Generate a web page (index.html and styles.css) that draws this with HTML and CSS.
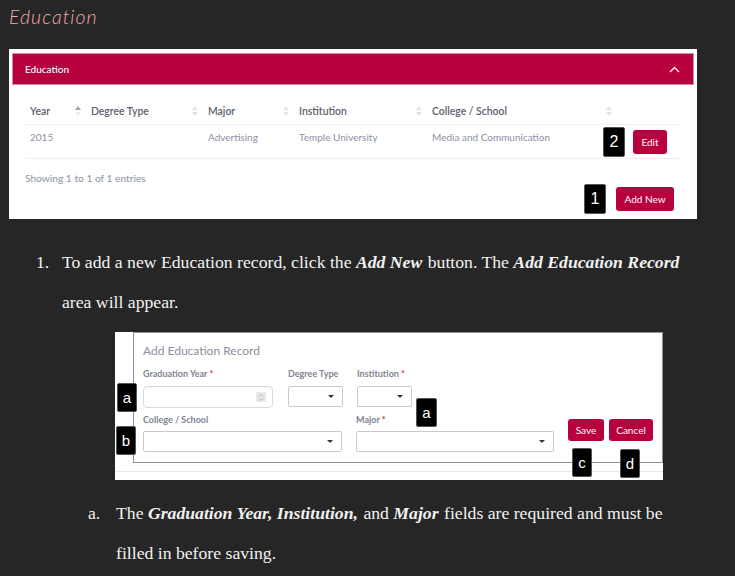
FILE: index.html
```html
<!DOCTYPE html>
<html lang="en">
<head>
<meta charset="utf-8">
<title>Education</title>
<link rel="stylesheet" href="styles.css">
</head>
<body>
<h1 class="page-title">Education</h1>

<section class="panel">
  <div class="panel-head">
    <span class="panel-title">Education</span>
    <svg class="chev" width="11" height="7" viewBox="0 0 11 7"><path d="M1 6 L5.5 1.5 L10 6" fill="none" stroke="#fff" stroke-width="1.3"/></svg>
  </div>
  <table class="grid">
    <colgroup>
      <col class="c1"><col class="c2"><col class="c3"><col class="c4"><col class="c5"><col class="c6">
    </colgroup>
    <thead>
      <tr>
        <th><div class="th-in"><span>Year</span><svg class="sort" width="6" height="10" viewBox="0 0 6 10"><path d="M0 4 L3 0 L6 4Z" fill="#a3a7b0"/><path d="M0 6 L3 10 L6 6Z" fill="#eceef1"/></svg></div></th>
        <th><div class="th-in"><span>Degree Type</span><svg class="sort" width="6" height="10" viewBox="0 0 6 10"><path d="M0 4 L3 0 L6 4Z" fill="#e2e4e8"/><path d="M0 6 L3 10 L6 6Z" fill="#e2e4e8"/></svg></div></th>
        <th><div class="th-in"><span>Major</span><svg class="sort" width="6" height="10" viewBox="0 0 6 10"><path d="M0 4 L3 0 L6 4Z" fill="#e2e4e8"/><path d="M0 6 L3 10 L6 6Z" fill="#e2e4e8"/></svg></div></th>
        <th><div class="th-in"><span>Institution</span><svg class="sort" width="6" height="10" viewBox="0 0 6 10"><path d="M0 4 L3 0 L6 4Z" fill="#e2e4e8"/><path d="M0 6 L3 10 L6 6Z" fill="#e2e4e8"/></svg></div></th>
        <th><div class="th-in"><span>College / School</span><svg class="sort" width="6" height="10" viewBox="0 0 6 10"><path d="M0 4 L3 0 L6 4Z" fill="#e2e4e8"/><path d="M0 6 L3 10 L6 6Z" fill="#e2e4e8"/></svg></div></th>
        <th></th>
      </tr>
    </thead>
    <tbody>
      <tr>
        <td>2015</td>
        <td></td>
        <td>Advertising</td>
        <td>Temple University</td>
        <td>Media and Communication</td>
        <td class="act"><span class="badge badge-edit">2</span><button class="btn btn-edit">Edit</button></td>
      </tr>
    </tbody>
  </table>
  <div class="panel-foot">
    <div class="info">Showing 1 to 1 of 1 entries</div>
    <div class="actions"><span class="badge">1</span><button class="btn btn-add">Add New</button></div>
  </div>
</section>

<div class="step">
  <span class="num">1.</span>
  <div class="step-body">
    <p class="line">To add a new Education record, click the <b class="em">Add New</b> button. The <b class="em">Add Education Record</b> area will appear.</p>

    <div class="shot">
      <div class="frame">
        <div class="frame-title">Add Education Record</div>
        <div class="row row1">
          <div class="field f-year">
            <label>Graduation Year <span class="req">*</span></label>
            <div class="input num-input">
              <span class="spin"><svg width="6" height="9" viewBox="0 0 6 9"><path d="M1 3.5 L3 1.5 L5 3.5 M1 5.5 L3 7.5 L5 5.5" fill="none" stroke="#9a9ea6" stroke-width="0.8"/></svg></span>
            </div>
          </div>
          <div class="field f-deg">
            <label>Degree Type</label>
            <div class="select"><span class="caret"></span></div>
          </div>
          <div class="field f-inst">
            <label>Institution <span class="req">*</span></label>
            <div class="select"><span class="caret"></span></div>
          </div>
        </div>
        <div class="row row2">
          <div class="field f-college">
            <label>College / School</label>
            <div class="select"><span class="caret"></span></div>
          </div>
          <div class="field f-major">
            <label>Major <span class="req">*</span></label>
            <div class="select"><span class="caret"></span></div>
          </div>
          <div class="form-btns">
            <button class="btn btn-save">Save</button>
            <button class="btn btn-cancel">Cancel</button>
          </div>
        </div>
      </div>
      <div class="shot-line"></div>
      <span class="badge sb sb-a1">a</span>
      <span class="badge sb sb-a2">a</span>
      <span class="badge sb sb-b">b</span>
      <span class="badge sb sb-c">c</span>
      <span class="badge sb sb-d">d</span>
    </div>

    <div class="substep">
      <span class="num">a.</span>
      <p class="line sub-line">The <b class="em">Graduation Year, Institution,</b> and <b class="em">Major</b> fields are required and must be filled in before saving.</p>
    </div>
  </div>
</div>
</body>
</html>
```

FILE: styles.css
```css
* { box-sizing: border-box; }

body {
  margin: 0;
  background: #262626;
  width: 735px;
  height: 576px;
  overflow: hidden;
  font-family: "Lato", "Liberation Sans", sans-serif;
}

.page-title {
  margin: 6px 0 0 9px;
  font-family: "Lato", sans-serif;
  font-weight: 300;
  font-style: italic;
  font-size: 19.5px;
  line-height: 22px;
  color: #f4a9ac;
  letter-spacing: 1px;
}

.panel {
  margin: 21px 0 0 9px;
  width: 688px;
  height: 170px;
  background: #fff;
  padding: 4px 3px 3px 3px;
  display: flex;
  flex-direction: column;
}

.panel-head {
  height: 32px;
  background: #b9003f;
  border: 1px solid #dc8ba6;
  display: flex;
  align-items: center;
  justify-content: space-between;
  padding: 0 13px 0 12px;
}

.panel-title {
  color: #fff;
  font-size: 10px;
  font-weight: 500;
}

.chev { display: block; }

.grid {
  margin: 14px 12px 0 13px;
  width: 657px;
  table-layout: fixed;
  border-collapse: collapse;
  font-size: 10px;
}

.c1 { width: 61px; }
.c2 { width: 117px; }
.c3 { width: 91px; }
.c4 { width: 133px; }
.c5 { width: 190px; }
.c6 { width: 65px; }

.grid th {
  height: 25px;
  padding: 0;
  text-align: left;
  color: #5b606b;
  font-weight: 600;
  font-size: 10.4px;
  border-bottom: 1px solid #eef0f4;
  vertical-align: middle;
}

.th-in {
  display: flex;
  align-items: center;
  justify-content: space-between;
  padding: 0 5px 0 5px;
}

.sort { display: block; }

.grid td {
  height: 34px;
  padding: 6px 0 0 5px;
  vertical-align: top;
  color: #8c91a0;
  line-height: 12px;
  border-bottom: 1px solid #eceef2;
}

.grid td.act {
  position: relative;
  padding: 5px 0 0 16px;
}

.btn {
  border: none;
  background: #b9003f;
  color: #fff;
  font-family: "Lato", sans-serif;
  font-size: 10px;
  border-radius: 3px;
  padding: 0;
  display: inline-flex;
  align-items: center;
  justify-content: center;
}

.btn-edit { width: 34px; height: 24px; }
.btn-add { width: 58px; height: 24px; }

.badge {
  display: inline-flex;
  align-items: center;
  justify-content: center;
  width: 22px;
  height: 30px;
  background: #000;
  color: #fff;
  border: 1px solid #555;
  border-radius: 2px;
  font-family: "Liberation Sans", sans-serif;
  font-size: 16px;
}

.badge-edit {
  position: absolute;
  left: -14px;
  top: 2px;
}

.panel-foot {
  display: flex;
  flex-direction: column;
  padding: 0 20px 0 13px;
}

.info {
  padding-top: 14px;
  line-height: 11px;
  font-size: 10.2px;
  color: #8c91a0;
}

.actions {
  display: flex;
  align-items: center;
  justify-content: flex-end;
  gap: 10px;
  height: 30px;
}

/* document text */
.step {
  margin: 23px 0 0 36px;
  display: grid;
  grid-template-columns: 26px 1fr;
  font-family: "Liberation Serif", "Times New Roman", serif;
  font-size: 17.7px;
  color: #f2f2f2;
}

.em {
  font-weight: 700;
  font-style: italic;
  padding-right: 1px;
}

.num {
  line-height: 40px;
}

.line {
  margin: 0;
  line-height: 40px;
  width: 640px;
}

.shot {
  position: relative;
  margin: 10px 0 0 53px;
  width: 548px;
  height: 148px;
  background: #fff;
  font-family: "Lato", "Liberation Sans", sans-serif;
}

.frame {
  margin-left: 18px;
  width: 530px;
  height: 131px;
  border: 1px solid #8e8f97;
  padding: 11px 0 0 9px;
}

.frame-title {
  font-size: 12px;
  line-height: 14px;
  color: #8a8f9b;
}

.row {
  display: flex;
}

.row1 { margin-top: 10px; gap: 15px; }
.row2 { margin-top: 6px; gap: 14px; }

.field {
  display: flex;
  flex-direction: column;
}

.field label {
  font-size: 9px;
  line-height: 11px;
  font-weight: 700;
  color: #7f8491;
}

.req { color: #e0303a; }

.row1 .field label { margin-bottom: 7px; }
.row2 .field label { margin-bottom: 6px; }

.f-year { width: 130px; }
.f-deg { width: 55px; }
.f-inst { width: 55px; margin-left: -1px; }
.f-college { width: 199px; }
.f-major { width: 198px; }

.input {
  height: 22px;
  border: 1px solid #d6d9df;
  border-radius: 4px;
  display: flex;
  align-items: center;
  justify-content: flex-end;
  padding-right: 6px;
}

.spin {
  width: 10px;
  height: 10px;
  background: #e9e9eb;
  display: flex;
  align-items: center;
  justify-content: center;
}

.select {
  height: 21px;
  border: 1px solid #c6c9cf;
  border-radius: 2px;
  display: flex;
  align-items: center;
  justify-content: flex-end;
  padding-right: 8px;
}

.caret {
  width: 0;
  height: 0;
  border-left: 3.5px solid transparent;
  border-right: 3.5px solid transparent;
  border-top: 3.5px solid #333;
}

.form-btns {
  display: flex;
  gap: 5px;
  margin-top: 5px;
  align-self: flex-start;
}

.btn-save { width: 36px; height: 22px; }
.btn-cancel { width: 44px; height: 22px; }

.shot-line {
  margin-top: 8px;
  height: 1px;
  background: #e6e8ee;
}

.sb {
  position: absolute;
  width: 20px;
  height: 29px;
  font-size: 15px;
}

.sb-a1 { left: 2px; top: 51px; }
.sb-a2 { left: 301px; top: 66px; width: 21px; }
.sb-b { left: 1px; top: 94px; }
.sb-c { left: 457px; top: 116px; }
.sb-d { left: 505px; top: 117px; }

.substep {
  margin: 13px 0 0 26px;
  display: grid;
  grid-template-columns: 28px 1fr;
}

.sub-line {
  width: 560px;
}
```
